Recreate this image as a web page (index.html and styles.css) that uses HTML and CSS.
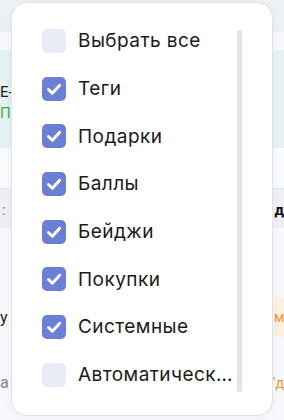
FILE: index.html
```html
<!DOCTYPE html>
<html lang="ru">
<head>
<meta charset="utf-8">
<link rel="stylesheet" href="styles.css">
</head>
<body>
<div class="page">
  <div class="band band-top"></div>
  <div class="band band-teal">
    <div class="teal-line dark">Е-</div>
    <div class="teal-line green">П</div>
  </div>
  <div class="band band-white"></div>
  <div class="band band-grey">
    <span class="muted">:</span>
    <span class="bold">д</span>
  </div>
  <div class="band band-body">
    <div class="body-row">
      <span class="dark">у</span>
      <span class="orange-box">м</span>
    </div>
    <div class="body-row second">
      <span class="bluegrey">а</span>
      <span class="orange">"д</span>
    </div>
  </div>
</div>

<div class="dropdown">
  <ul class="options">
    <li class="option"><span class="box"></span><span class="label">Выбрать все</span></li>
    <li class="option"><span class="box checked"><svg viewBox="0 0 24 24"><path d="M6.5 12.5l3.8 3.8 7.4-8"/></svg></span><span class="label">Теги</span></li>
    <li class="option"><span class="box checked"><svg viewBox="0 0 24 24"><path d="M6.5 12.5l3.8 3.8 7.4-8"/></svg></span><span class="label">Подарки</span></li>
    <li class="option"><span class="box checked"><svg viewBox="0 0 24 24"><path d="M6.5 12.5l3.8 3.8 7.4-8"/></svg></span><span class="label">Баллы</span></li>
    <li class="option"><span class="box checked"><svg viewBox="0 0 24 24"><path d="M6.5 12.5l3.8 3.8 7.4-8"/></svg></span><span class="label">Бейджи</span></li>
    <li class="option"><span class="box checked"><svg viewBox="0 0 24 24"><path d="M6.5 12.5l3.8 3.8 7.4-8"/></svg></span><span class="label">Покупки</span></li>
    <li class="option"><span class="box checked"><svg viewBox="0 0 24 24"><path d="M6.5 12.5l3.8 3.8 7.4-8"/></svg></span><span class="label">Системные</span></li>
    <li class="option"><span class="box"></span><span class="label">Автоматические</span></li>
  </ul>
  <div class="scrollbar"></div>
</div>
</body>
</html>
```

FILE: styles.css
```css
html, body {
  margin: 0;
  padding: 0;
}
body {
  width: 284px;
  height: 420px;
  overflow: hidden;
  background: #eef0f7;
  font-family: Roboto, "Liberation Sans", sans-serif;
  position: relative;
}
.page {
  padding-top: 32px;
  display: flex;
  flex-direction: column;
}
.band {
  width: 284px;
}
.band-top {
  height: 18px;
  background: #f8f9fc;
}
.band-teal {
  height: 98px;
  background: #e6f1f1;
  box-sizing: border-box;
  padding-top: 32px;
  font-size: 15px;
  line-height: 21px;
}
.teal-line.dark { color: #1d1d1d; }
.teal-line.green { color: #3cae4a; }
.band-white {
  height: 40px;
  background: #fafbfd;
  border-bottom: 1px solid #e3e6ee;
}
.band-grey {
  height: 39px;
  background: #eef0f6;
  display: flex;
  justify-content: space-between;
  align-items: center;
  font-size: 15px;
  padding-top: 2px;
  box-sizing: border-box;
}
.muted { color: #6b7080; padding-left: 2px; }
.bold { font-weight: 700; color: #111; }
.band-body {
  height: 200px;
  background: #f8f9fc;
  padding-top: 69px;
  box-sizing: border-box;
  font-size: 16px;
}
.body-row {
  display: flex;
  justify-content: space-between;
  align-items: center;
}
.body-row .dark { color: #1d1d1d; }
.orange-box {
  background: #fcf1e3;
  color: #ef9a35;
  height: 40px;
  width: 10px;
  font-size: 14px;
  display: flex;
  align-items: center;
}
.body-row.second {
  margin-top: 36px;
}
.bluegrey { color: #7b84a6; }
.orange { color: #ef9a35; font-size: 14px; }

.dropdown {
  position: absolute;
  left: 11px;
  top: 2px;
  width: 262px;
  height: 414px;
  box-sizing: border-box;
  background: #ffffff;
  border: 1px solid #e0e2ea;
  border-radius: 16px;
  box-shadow: 0 2px 8px rgba(40, 50, 90, 0.06);
  display: flex;
  gap: 3px;
  padding: 14px 30px 0 30px;
}
.options {
  list-style: none;
  margin: 0;
  padding: 0;
  flex: 1;
  min-width: 0;
}
.option {
  height: 47.7px;
  display: flex;
  align-items: center;
  gap: 12px;
}
.box {
  flex: none;
  width: 24px;
  height: 24px;
  border-radius: 5px;
  background: #e9ecf7;
  display: flex;
  align-items: center;
  justify-content: center;
}
.box.checked {
  background: #6b7fd7;
}
.box svg {
  width: 24px;
  height: 24px;
}
.box svg path {
  fill: none;
  stroke: #ffffff;
  stroke-width: 3;
  stroke-linecap: round;
  stroke-linejoin: round;
}
.label {
  font-family: Inter, Roboto, sans-serif;
  font-size: 19px;
  letter-spacing: 0.45px;
  color: #1a1a1a;
  white-space: nowrap;
  overflow: hidden;
  text-overflow: ellipsis;
  min-width: 0;
}
.scrollbar {
  flex: none;
  width: 5px;
  height: 362px;
  margin-top: 13px;
  border-radius: 3px;
  background: #e1e4ec;
}
```
